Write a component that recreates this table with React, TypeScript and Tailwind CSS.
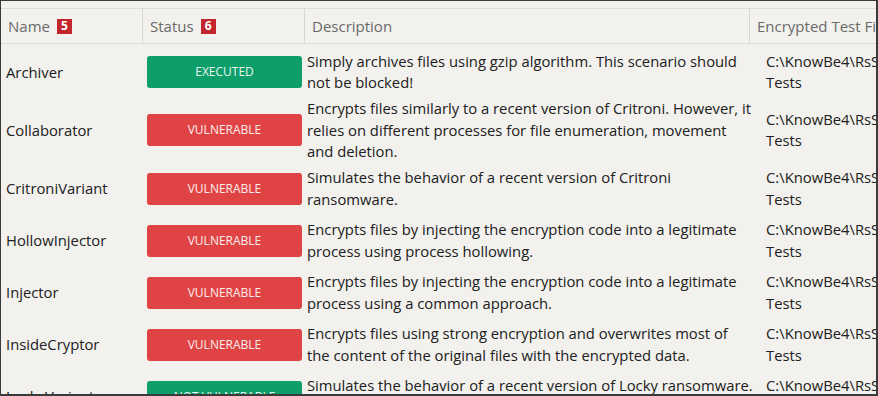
import React from "react";

type Status = "EXECUTED" | "VULNERABLE" | "NOT VULNERABLE";

interface Scenario {
  name: string;
  status: Status;
  desc: string[];
}

const SCENARIOS: Scenario[] = [
  {
    name: "Archiver",
    status: "EXECUTED",
    desc: ["Simply archives files using gzip algorithm. This scenario should", "not be blocked!"],
  },
  {
    name: "Collaborator",
    status: "VULNERABLE",
    desc: [
      "Encrypts files similarly to a recent version of Critroni. However, it",
      "relies on different processes for file enumeration, movement",
      "and deletion.",
    ],
  },
  {
    name: "CritroniVariant",
    status: "VULNERABLE",
    desc: ["Simulates the behavior of a recent version of Critroni", "ransomware."],
  },
  {
    name: "HollowInjector",
    status: "VULNERABLE",
    desc: ["Encrypts files by injecting the encryption code into a legitimate", "process using process hollowing."],
  },
  {
    name: "Injector",
    status: "VULNERABLE",
    desc: ["Encrypts files by injecting the encryption code into a legitimate", "process using a common approach."],
  },
  {
    name: "InsideCryptor",
    status: "VULNERABLE",
    desc: ["Encrypts files using strong encryption and overwrites most of", "the content of the original files with the encrypted data."],
  },
  {
    name: "LockyVariant",
    status: "NOT VULNERABLE",
    desc: ["Simulates the behavior of a recent version of Locky ransomware.", ""],
  },
];

const NumberTag: React.FC<{ n: number }> = ({ n }) => (
  <span className="ml-[7px] inline-flex h-[15px] w-[15px] items-center justify-center bg-[#c3252d] text-[12px] font-bold leading-none text-white">
    {n}
  </span>
);

const StatusBadge: React.FC<{ status: Status }> = ({ status }) => {
  const color = status === "VULNERABLE" ? "bg-[#df4343]" : "bg-[#0d9e69]";
  return (
    <div
      className={`flex h-[32px] w-[155px] items-center justify-center rounded-[3px] text-[12px] text-white/90 ${color}`}
    >
      {status}
    </div>
  );
};

export default function App() {
  return (
    <div
      className="h-[396px] w-[878px] overflow-hidden border-t border-l border-r-2 border-b-2 border-[#3a3a3a] bg-[#f2f1ed] text-[14.8px] text-[#202020]"
      style={{ fontFamily: "'Open Sans', 'Noto Sans', sans-serif" }}
    >
      <div className="mt-[7px] grid h-[36px] grid-cols-[142px_162px_445px_1fr] border-t border-b border-[#dddcd8] text-[15px] text-[#6a6a6a]">
        <div className="flex items-center border-r border-[#d6d5d1] pl-[7px]">
          Name
          <NumberTag n={5} />
        </div>
        <div className="flex items-center border-r border-[#d6d5d1] pl-[7px]">
          Status
          <NumberTag n={6} />
        </div>
        <div className="flex items-center border-r border-[#d6d5d1] pl-[7px]">Description</div>
        <div className="flex items-center overflow-hidden whitespace-nowrap pl-[7px]">Encrypted Test Files</div>
      </div>

      <div className="mt-[2px]">
        {SCENARIOS.map((s) => (
          <div key={s.name} className="grid min-h-[52px] grid-cols-[142px_162px_445px_1fr] items-center">
            <div className="pl-[5px]">{s.name}</div>
            <div className="pl-[4px]">
              <StatusBadge status={s.status} />
            </div>
            <div className="whitespace-nowrap pl-[2px] leading-[21.5px]">
              {s.desc.map((line, i) => (
                <div key={i}>{line || "\u00a0"}</div>
              ))}
            </div>
            <div className="overflow-hidden whitespace-nowrap pl-[16px] leading-[21.5px]">
              <div>C:\KnowBe4\RsSim\Encrypted</div>
              <div>Tests</div>
            </div>
          </div>
        ))}
      </div>
    </div>
  );
}
